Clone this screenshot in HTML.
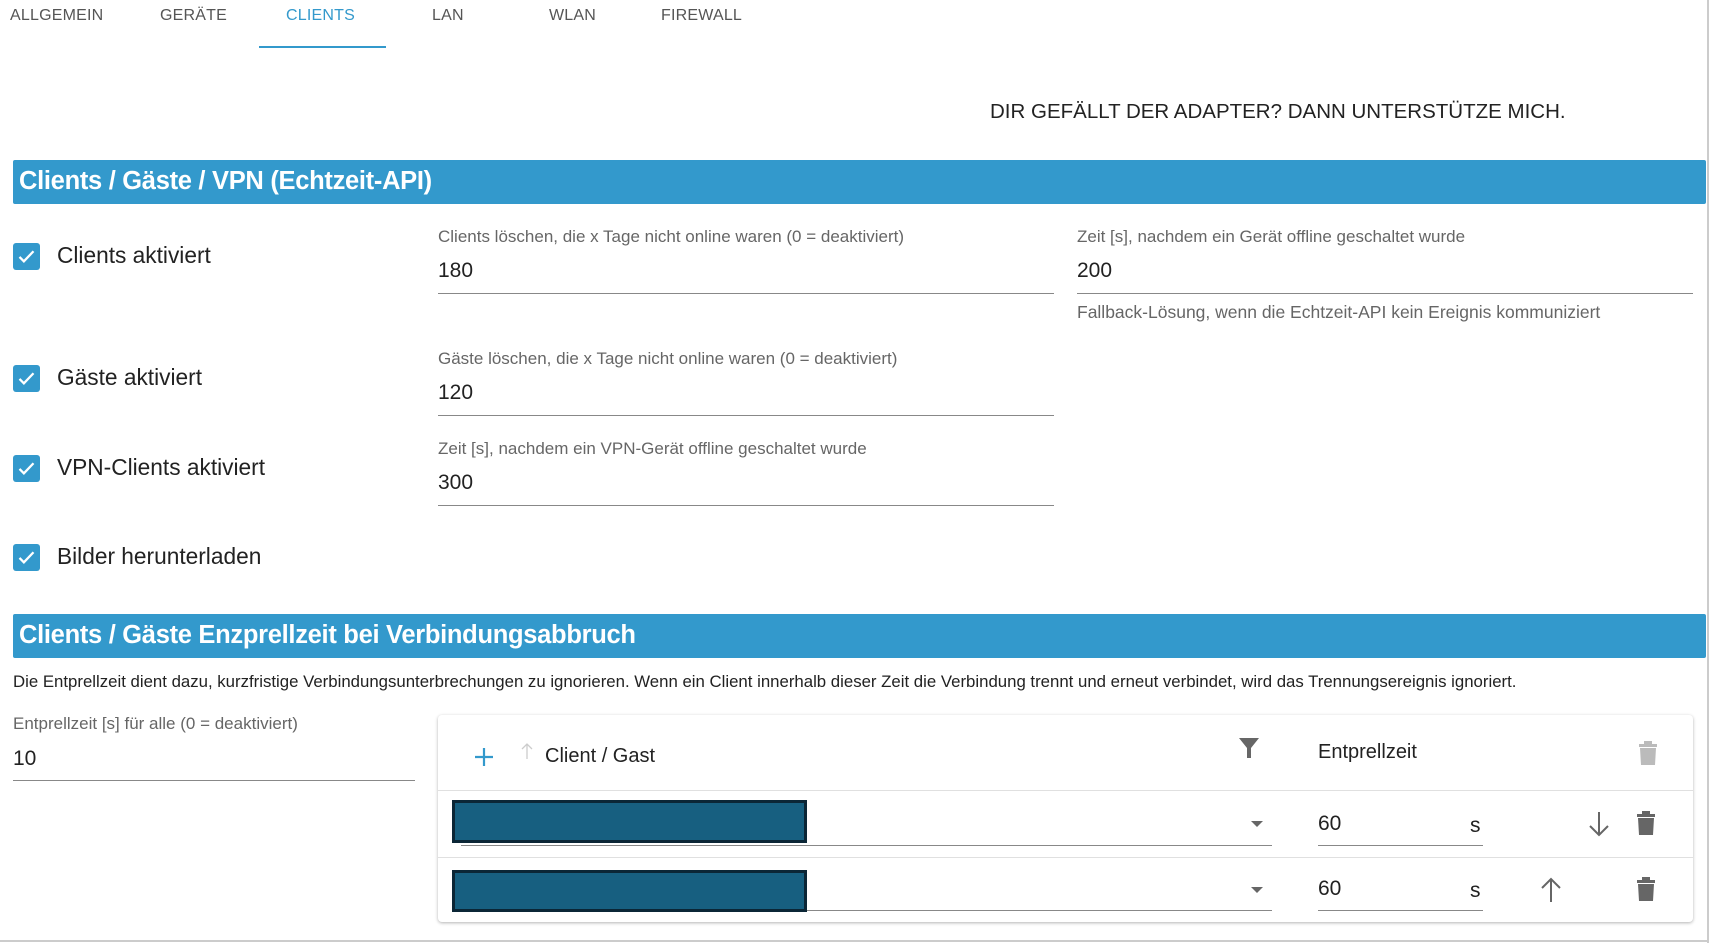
<!DOCTYPE html>
<html><head><meta charset="utf-8">
<style>
*{box-sizing:border-box;margin:0;padding:0}
body{width:1709px;height:943px;background:#fff;font-family:"Liberation Sans",Arial,sans-serif;position:relative;overflow:hidden;color:#222}
.a{position:absolute;white-space:nowrap}
.tab{position:absolute;top:7px;font-size:16px;color:#555;letter-spacing:.2px}
.hdr{position:absolute;left:13px;width:1693px;height:44px;background:#3399cc;color:#fff;font-weight:bold;font-size:25.5px;padding:7px 0 0 6px;border-radius:2px;letter-spacing:-.3px}
.cb{position:absolute;left:13px;width:27px;height:27px;background:#3399cc;border-radius:3px}
.cb svg{position:absolute;left:3px;top:3px}
.cl{position:absolute;left:57px;font-size:22.7px;color:#222}
.lab{position:absolute;font-size:17px;color:#666}
.val{position:absolute;font-size:21px;color:#222}
.ln{position:absolute;height:1px;background:#888}
</style></head><body>
<div style="position:absolute;right:0;top:0;width:2px;height:943px;background:#ccc"></div>
<div style="position:absolute;left:0;top:940px;width:1709px;height:2px;background:#ccc"></div>

<div class="tab" style="left:10px">ALLGEMEIN</div>
<div class="tab" style="left:160px">GERÄTE</div>
<div class="tab" style="left:286px;color:#3399cc">CLIENTS</div>
<div class="tab" style="left:432px">LAN</div>
<div class="tab" style="left:549px">WLAN</div>
<div class="tab" style="left:661px">FIREWALL</div>
<div class="a" style="left:259px;top:46px;width:127px;height:2px;background:#3399cc"></div>

<div class="a" style="left:990px;top:100px;font-size:20.5px;color:#222">DIR GEFÄLLT DER ADAPTER? DANN UNTERSTÜTZE MICH.</div>

<div class="hdr" style="top:160px">Clients / Gäste / VPN (Echtzeit-API)</div>

<div class="cb" style="top:243px"><svg width="21" height="21" viewBox="0 0 24 24"><path d="M4 12.5l5 5L20 6" stroke="#fff" stroke-width="2.6" fill="none"/></svg></div>
<div class="cl" style="top:242px">Clients aktiviert</div>
<div class="cb" style="top:365px"><svg width="21" height="21" viewBox="0 0 24 24"><path d="M4 12.5l5 5L20 6" stroke="#fff" stroke-width="2.6" fill="none"/></svg></div>
<div class="cl" style="top:364px">Gäste aktiviert</div>
<div class="cb" style="top:455px"><svg width="21" height="21" viewBox="0 0 24 24"><path d="M4 12.5l5 5L20 6" stroke="#fff" stroke-width="2.6" fill="none"/></svg></div>
<div class="cl" style="top:454px">VPN-Clients aktiviert</div>
<div class="cb" style="top:544px"><svg width="21" height="21" viewBox="0 0 24 24"><path d="M4 12.5l5 5L20 6" stroke="#fff" stroke-width="2.6" fill="none"/></svg></div>
<div class="cl" style="top:543px">Bilder herunterladen</div>

<div class="lab" style="left:438px;top:227px">Clients löschen, die x Tage nicht online waren (0 = deaktiviert)</div>
<div class="val" style="left:438px;top:259px">180</div>
<div class="ln" style="left:438px;top:293px;width:616px"></div>
<div class="lab" style="left:1077px;top:227px">Zeit [s], nachdem ein Gerät offline geschaltet wurde</div>
<div class="val" style="left:1077px;top:259px">200</div>
<div class="ln" style="left:1077px;top:293px;width:616px"></div>
<div class="lab" style="left:1077px;top:302px;font-size:17.5px">Fallback-Lösung, wenn die Echtzeit-API kein Ereignis kommuniziert</div>

<div class="lab" style="left:438px;top:349px">Gäste löschen, die x Tage nicht online waren (0 = deaktiviert)</div>
<div class="val" style="left:438px;top:381px">120</div>
<div class="ln" style="left:438px;top:415px;width:616px"></div>

<div class="lab" style="left:438px;top:439px">Zeit [s], nachdem ein VPN-Gerät offline geschaltet wurde</div>
<div class="val" style="left:438px;top:471px">300</div>
<div class="ln" style="left:438px;top:505px;width:616px"></div>

<div class="hdr" style="top:614px">Clients / Gäste Enzprellzeit bei Verbindungsabbruch</div>
<div class="a" style="left:13px;top:672px;font-size:16.8px;color:#222">Die Entprellzeit dient dazu, kurzfristige Verbindungsunterbrechungen zu ignorieren. Wenn ein Client innerhalb dieser Zeit die Verbindung trennt und erneut verbindet, wird das Trennungsereignis ignoriert.</div>

<div class="lab" style="left:13px;top:714px">Entprellzeit [s] für alle (0 = deaktiviert)</div>
<div class="val" style="left:13px;top:747px">10</div>
<div class="ln" style="left:13px;top:780px;width:402px"></div>

<div class="a" style="left:438px;top:715px;width:1255px;height:207px;border-radius:4px;box-shadow:0 1px 3px rgba(0,0,0,.3)"></div>
<div class="a" style="left:438px;top:790px;width:1255px;height:1px;background:#e0e0e0"></div>
<div class="a" style="left:438px;top:857px;width:1255px;height:1px;background:#e0e0e0"></div>

<svg class="a" style="left:472px;top:745px" width="24" height="24" viewBox="0 0 24 24"><path d="M12 3v18M3 12h18" stroke="#3399cc" stroke-width="2.2"/></svg>
<svg class="a" style="left:520px;top:742px" width="14" height="18" viewBox="0 0 14 18"><path d="M7 17V2M2 7l5-5 5 5" stroke="#ccc" stroke-width="1.3" fill="none"/></svg>
<div class="a" style="left:545px;top:745px;font-size:20px;color:#222">Client / Gast</div>
<svg class="a" style="left:1238px;top:737px" width="22" height="24" viewBox="0 0 22 24"><path d="M1 1h20l-8 10v10h-4V11z" fill="#666"/></svg>
<div class="a" style="left:1318px;top:741px;font-size:20px;color:#222">Entprellzeit</div>
<svg class="a" style="left:1638px;top:740px" width="20" height="26" viewBox="0 0 20 26"><path d="M6 1h8v3h5v3H1V4h5zM2 8h16l-1 17H3z" fill="#bbb"/></svg>

<div class="a" style="left:452px;top:800px;width:355px;height:43px;background:#175f80;border:3px solid #0b2636"></div>
<div class="a" style="left:807px;top:845px;width:465px;height:1px;background:#888"></div>
<div class="a" style="left:461px;top:845px;width:346px;height:1px;background:#888"></div>
<svg class="a" style="left:1250px;top:820px" width="14" height="8" viewBox="0 0 14 8"><path d="M1 1h12L7 7z" fill="#666"/></svg>
<div class="val" style="left:1318px;top:812px">60</div>
<div class="val" style="left:1470px;top:814px">s</div>
<div class="a" style="left:1318px;top:845px;width:165px;height:1px;background:#888"></div>
<svg class="a" style="left:1588px;top:810px" width="22" height="28" viewBox="0 0 22 28"><path d="M11 2v23M2 16l9 9 9-9" stroke="#666" stroke-width="2" fill="none"/></svg>
<svg class="a" style="left:1636px;top:810px" width="20" height="26" viewBox="0 0 20 26"><path d="M6 1h8v3h5v3H1V4h5zM2 8h16l-1 17H3z" fill="#666"/></svg>

<div class="a" style="left:452px;top:870px;width:355px;height:42px;background:#175f80;border:3px solid #0b2636"></div>
<div class="a" style="left:807px;top:910px;width:465px;height:1px;background:#888"></div>
<svg class="a" style="left:1250px;top:886px" width="14" height="8" viewBox="0 0 14 8"><path d="M1 1h12L7 7z" fill="#666"/></svg>
<div class="val" style="left:1318px;top:877px">60</div>
<div class="val" style="left:1470px;top:879px">s</div>
<div class="a" style="left:1318px;top:910px;width:165px;height:1px;background:#888"></div>
<svg class="a" style="left:1540px;top:876px" width="22" height="28" viewBox="0 0 22 28"><path d="M11 26V3M2 12l9-9 9 9" stroke="#666" stroke-width="2" fill="none"/></svg>
<svg class="a" style="left:1636px;top:876px" width="20" height="26" viewBox="0 0 20 26"><path d="M6 1h8v3h5v3H1V4h5zM2 8h16l-1 17H3z" fill="#666"/></svg>
</body></html>
